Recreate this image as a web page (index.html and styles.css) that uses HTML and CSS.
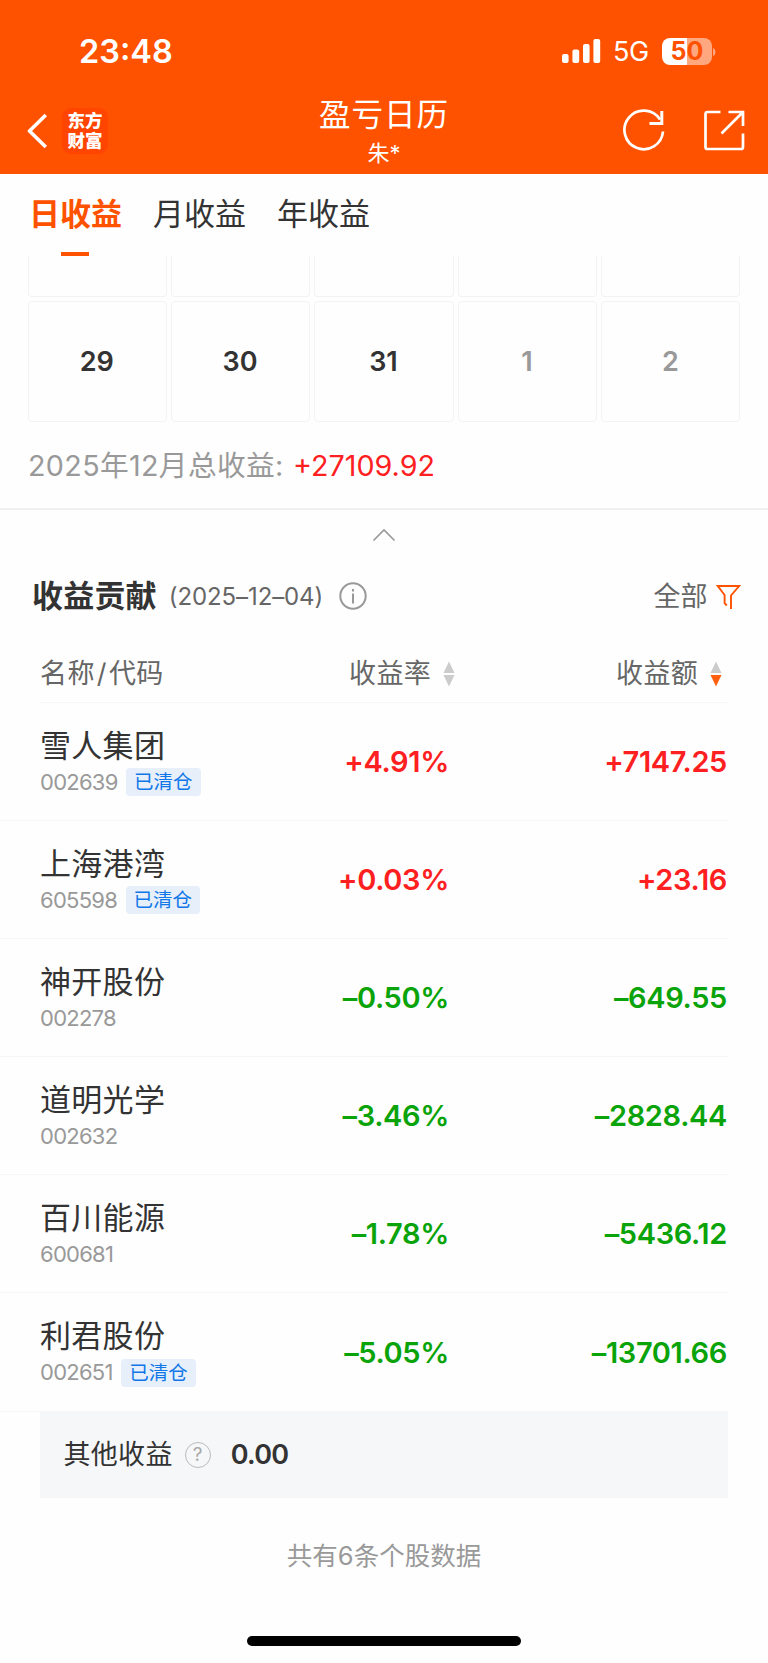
FILE: index.html
```html
<!DOCTYPE html>
<html lang="zh-CN">
<head>
<meta charset="utf-8">
<title>盈亏日历</title>
<link rel="stylesheet" href="styles.css">
</head>
<body>
<header class="top">
  <div class="status">
    <span class="time">23:48</span>
    <div class="status-right">
      <svg class="signal" width="39" height="25" viewBox="0 0 39 25" fill="#fff"><rect x="0" y="15" width="6.6" height="9" rx="2"/><rect x="10.4" y="10.5" width="6.8" height="13.5" rx="2"/><rect x="21" y="5" width="6.6" height="19" rx="2"/><rect x="31.4" y="0" width="6.8" height="24" rx="2"/></svg>
      <span class="net">5G</span>
      <div class="battery"><span class="charge">50</span><svg width="4" height="10" viewBox="0 0 4 10"><path d="M1 1Q3.5 2 3.5 5T1 9Z" fill="#ffa880"/></svg></div>
    </div>
  </div>
  <nav class="navbar">
    <div class="nav-left">
      <svg width="22" height="36" viewBox="0 0 22 36" fill="none" stroke="#fff" stroke-width="3.6"><path d="M18.800 2L2.500 18L18.800 34" stroke-linejoin="round"/></svg>
      <div class="logo"><span>东方</span><span>财富</span></div>
    </div>
    <div class="titles"><h1>盈亏日历</h1><p>朱*</p></div>
    <div class="nav-right">
      <svg width="42" height="44" viewBox="0 0 42 44" fill="none" stroke="#fff" stroke-width="2.7"><path d="M40 23.500A19.300 19.300 0 1 1 37 11.500"/><path d="M38.800 3V15.400H26.500" stroke-width="3"/></svg>
      <svg width="42" height="44" viewBox="0 0 42 44" fill="none" stroke="#fff" stroke-width="2.7"><path d="M17.500 4H4.500Q2.500 4 2.500 6V39Q2.500 41 4.500 41H38Q40 41 40 39V25.500"/><path d="M25.500 4H40V18M40 4L18.500 25.500"/></svg>
    </div>
  </nav>
</header>
<div class="tabs"><span class="tab active">日收益</span><span class="tab">月收益</span><span class="tab">年收益</span></div>
<section class="calendar">
  <div class="grid cut"><i></i><i></i><i></i><i></i><i></i></div>
  <div class="grid days"><span>29</span><span>30</span><span>31</span><span class="dim">1</span><span class="dim">2</span></div>
</section>
<div class="total"><span class="total-label"><span class="n">2025</span>年<span class="n">12</span>月总收益<span class="n">:</span></span><span class="total-value">+27109.92</span></div>
<div class="fold"><svg width="24" height="14" viewBox="0 0 24 14" fill="none" stroke="#999" stroke-width="1.6"><path d="M1.500 12.500L12 2L22.500 12.500"/></svg></div>
<div class="section-head">
  <h2>收益贡献</h2><span class="date">(2025–12–04)</span>
  <svg class="info" width="28" height="28" viewBox="0 0 28 28" fill="none" stroke="#999" stroke-width="2"><circle cx="14" cy="14" r="12.700"/><path d="M14 11.500V21.500M14 7V9.500"/></svg>
  <span class="filter">全部</span>
  <svg class="funnel" width="25" height="26" viewBox="0 0 25 26" fill="none" stroke="#ff5200" stroke-width="1.900"><path d="M10.800 21.500L8.600 19.200V11L1.800 2H23.200L15 11.500V25"/></svg>
</div>
<div class="cols">
  <span class="c1">名称<u>/</u>代码</span>
  <span class="c2">收益率<svg width="12" height="26" viewBox="0 0 12 26"><path d="M6 .5L11.500 12H.5Z M.5 14H11.500L6 25.500Z" fill="#ccc"/></svg></span>
  <span class="c3">收益额<svg width="12" height="26" viewBox="0 0 12 26"><path d="M6 .5L11.500 12H.5Z" fill="#ccc"/><path d="M.5 14H11.500L6 25.500Z" fill="#ff6010"/></svg></span>
</div>
<main class="rows">
  <div class="row up"><div class="stock"><b>雪人集团</b><p><span>002639</span><em>已清仓</em></p></div><span class="rate">+4.91%</span><span class="amount">+7147.25</span></div>
  <div class="row up"><div class="stock"><b>上海港湾</b><p><span>605598</span><em>已清仓</em></p></div><span class="rate">+0.03%</span><span class="amount">+23.16</span></div>
  <div class="row down"><div class="stock"><b>神开股份</b><p><span>002278</span></p></div><span class="rate">–0.50%</span><span class="amount">–649.55</span></div>
  <div class="row down"><div class="stock"><b>道明光学</b><p><span>002632</span></p></div><span class="rate">–3.46%</span><span class="amount">–2828.44</span></div>
  <div class="row down"><div class="stock"><b>百川能源</b><p><span>600681</span></p></div><span class="rate">–1.78%</span><span class="amount">–5436.12</span></div>
  <div class="row down"><div class="stock"><b>利君股份</b><p><span>002651</span><em>已清仓</em></p></div><span class="rate">–5.05%</span><span class="amount">–13701.66</span></div>
</main>
<div class="other"><span class="other-label">其他收益</span><span class="help">?</span><span class="other-value">0.00</span></div>
<p class="count">共有<span>6</span>条个股数据</p>
<div class="home"></div>
</body>
</html>
```

FILE: styles.css
```css
* { box-sizing: border-box; margin: 0; padding: 0; }
body { width: 768px; height: 1663px; overflow: hidden; background: #fefefe; color: #333; font-family: Inter, "Noto Sans CJK SC", sans-serif; font-weight: 400; display: flex; flex-direction: column; }
svg { display: block; flex: none; }
i, em { font-style: normal; }
body > * { flex: none; }

.top { height: 173.500px; background: #ff5200; color: #fff; }
.status { height: 88px; padding: 15px 52px 0 79px; display: flex; justify-content: space-between; align-items: center; }
.time { font-size: 32.500px; font-weight: 600; line-height: 40px; letter-spacing: 0; }
.status-right { display: flex; align-items: center; }
.net { margin-left: 12px; width: 37px; font-size: 27px; font-weight: 400; line-height: 30px; letter-spacing: -0.500px; white-space: nowrap; }
.battery { display: flex; align-items: center; margin-left: 12px; }
.charge { width: 50px; height: 27px; border-radius: 8px; background: linear-gradient(90deg, #fff 50%, #ffa880 50%); color: #ff5200; font-size: 25px; font-weight: 700; line-height: 27px; text-align: center; }
.navbar { height: 85px; display: grid; grid-template-columns: 1fr 1fr 1fr; }
.nav-left { display: flex; align-items: center; gap: 13px; padding: 0 0 0 27px; height: 85px; }
.logo { width: 46px; height: 46px; border-radius: 9px; background: #ff4500; display: flex; flex-direction: column; align-items: center; justify-content: center; font-size: 17.500px; font-weight: 900; line-height: 19.500px; }
.titles { text-align: center; padding-top: 7px; }
.titles h1 { font-size: 31.500px; letter-spacing: 1px; line-height: 40px; font-weight: 400; }
.titles p { font-size: 22px; line-height: 30px; margin-top: 3px; }
.nav-right { display: flex; justify-content: flex-end; gap: 38px; padding: 20px 23.500px 0 0; }

.tabs { height: 82.500px; padding: 17.500px 0 0 29px; display: flex; gap: 31px; font-size: 31px; line-height: 46px; }
.tab { height: 65px; }
.active { color: #ff5200; font-weight: 700; display: flex; flex-direction: column; align-items: center; }
.active::after { content: ""; width: 28px; height: 4px; background: #ff5200; margin: 14.500px 1px 0 0; }

.calendar { padding: 0 27.500px; }
.grid { display: grid; grid-template-columns: repeat(5, 1fr); gap: 4px; }
.grid > * { border: 1px solid #f3f3f3; border-radius: 4px; }
.cut > * { height: 41px; border-top: 0; border-radius: 0 0 4px 4px; }
.days { margin-top: 4px; }
.days > * { height: 121px; display: flex; align-items: center; justify-content: center; font-size: 27px; font-weight: 600; padding-right: 1px; }
.days .dim { color: #999; }

.total { height: 87.500px; padding: 22px 28px 0; border-bottom: 2px solid #f0f0f0; font-size: 28.700px; line-height: 44px; color: #999; display: flex; }
.total-label { width: 265px; white-space: nowrap; letter-spacing: 0.350px; }
.total-value { color: #fe2020; }
.fold { height: 52px; padding-top: 18px; display: flex; justify-content: center; }
.section-head { height: 68px; padding: 0 26.500px 0 32px; display: flex; align-items: center; }
.section-head h2 { font-size: 31px; line-height: 44px; font-weight: 700; letter-spacing: 0.200px; }
.date { margin-left: 12px; width: 156px; font-size: 24px; line-height: 34px; color: #666; white-space: nowrap; letter-spacing: -0.100px; padding-top: 2px; }
.info { margin-left: 14px; }
.filter { margin-left: auto; margin-right: 8px; font-size: 27px; color: #666; line-height: 40px; padding-top: 3px; }
.funnel { margin: 3px 1px 0 0; }
.cols { height: 73.500px; margin: 0 40px; border-bottom: 1.500px solid #f6f6f6; display: grid; grid-template-columns: 309px 1fr 112px; padding-top: 16px; font-size: 27px; line-height: 40px; color: #666; letter-spacing: 0.400px; }
.cols span { display: flex; align-items: center; }
.cols u { text-decoration: none; margin: 0 2px; }
.cols svg { margin-left: 12px; }

.row { height: 118.100px; width: 728px; padding: 0 1px 0 40px; border-bottom: 1.500px solid #f6f6f6; display: grid; grid-template-columns: 208px 201px 1fr; align-items: center; text-align: right; font-size: 29px; font-weight: 600; letter-spacing: -0.350px; }
.stock { text-align: left; height: 98px; }
.stock b { display: block; margin-top: 11px; font-size: 31px; line-height: 44px; letter-spacing: 0.300px; font-weight: 400; }
.stock p { display: flex; align-items: center; gap: 8.500px; height: 28px; font-size: 22px; letter-spacing: -0.750px; font-weight: 400; color: #999; line-height: 28px; }
.stock em { height: 28px; margin-top: 1px; border-radius: 4px; background: #e6effa; color: #1177e8; font-size: 19.500px; letter-spacing: 0; padding: 0 8px; line-height: 28px; font-weight: 400; }
.up { color: #fe2020; }
.down { color: #0aa30a; }
.stock b { color: #333; }

.other { height: 86px; margin: 0 40px; padding: 1px 0 0 23.500px; background: #f6f7f9; display: flex; align-items: center; font-size: 27px; line-height: 40px; }
.other-label { letter-spacing: 0.300px; }
.help { margin-left: 12px; width: 26px; height: 26px; border: 1.500px solid #bbb; border-radius: 50%; color: #aaa; font-size: 19px; font-weight: 400; line-height: 24px; text-align: center; }
.other-value { margin-left: 20px; font-weight: 600; letter-spacing: -0.700px; }
.count { height: 138px; padding-top: 38px; text-align: center; color: #999; font-size: 25.500px; line-height: 40px; }
.home { width: 274px; height: 10px; border-radius: 5px; background: #000; margin: 0 auto; }
```
